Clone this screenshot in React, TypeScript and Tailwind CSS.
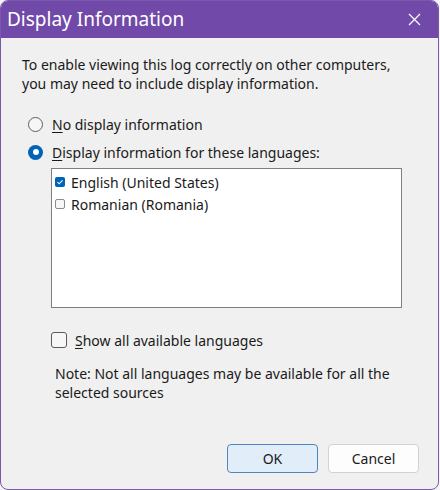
const font = { fontFamily: '"Noto Sans", "Open Sans", sans-serif' }

function Radio({ checked }: { checked?: boolean }) {
  if (checked) {
    return (
      <span className="flex h-[15px] w-[15px] items-center justify-center rounded-full bg-[#0063b8]">
        <span className="h-[6px] w-[6px] rounded-full bg-white" />
      </span>
    )
  }
  return <span className="h-[15px] w-[15px] rounded-full border border-[#5f5f5f] bg-[#f6f6f6]" />
}

function SmallCheck({ checked }: { checked?: boolean }) {
  if (checked) {
    return (
      <span className="flex h-[10px] w-[10px] items-center justify-center rounded-[2px] bg-[#0063b8]">
        <svg width="8" height="8" viewBox="0 0 8 8" fill="none">
          <path d="M1.5 4.2 3.2 5.8 6.5 2.3" stroke="white" strokeWidth="1.1" />
        </svg>
      </span>
    )
  }
  return <span className="h-[10px] w-[10px] rounded-[2px] border border-[#8c8c8c] bg-[#f7f7f7]" />
}

export default function App() {
  return (
    <div className="h-[490px] w-[440px] bg-[#f4f4f4]" style={font}>
      <div className="flex h-[490px] w-[439px] flex-col overflow-hidden rounded-[8px] border border-[#7a58ad] bg-[#f0f0f0]">
        <div className="flex h-[37px] shrink-0 items-center justify-between bg-[#7149a8] pl-[6px] pr-[17px]">
          <span className="text-[19px] leading-none text-white">Display Information</span>
          <svg width="13" height="13" viewBox="0 0 13 13">
            <path d="M1 1 12 12M12 1 1 12" stroke="white" strokeWidth="1.2" />
          </svg>
        </div>

        <div className="flex flex-1 flex-col pl-[21px] pr-[19px] text-[14px] leading-[19px] text-[#1a1a1a]">
          <p className="mt-[17px]">
            To enable viewing this log correctly on other computers,
            <br />
            you may need to include display information.
          </p>

          <div className="ml-[6px] mt-[21px] flex h-[20px] items-center gap-[9px]">
            <Radio />
            <span>
              <span className="underline underline-offset-2">N</span>o display information
            </span>
          </div>
          <div className="ml-[6px] mt-[8px] flex h-[20px] items-center gap-[9px]">
            <Radio checked />
            <span>
              <span className="underline underline-offset-2">D</span>isplay information for these languages:
            </span>
          </div>

          <div className="ml-[29px] mt-[6px] h-[140px] w-[351px] border border-[#7f7f7f] bg-white py-[2px] pl-[3px]">
            <div className="flex h-[22px] items-center gap-[6px]">
              <SmallCheck checked />
              <span>English (United States)</span>
            </div>
            <div className="flex h-[22px] items-center gap-[6px]">
              <SmallCheck />
              <span>Romanian (Romania)</span>
            </div>
          </div>

          <div className="ml-[29px] mt-[22px] flex h-[20px] items-center gap-[8px]">
            <span className="h-[16px] w-[16px] rounded-[3px] border border-[#5c5c5c] bg-[#f7f7f7]" />
            <span>
              <span className="underline underline-offset-2">S</span>how all available languages
            </span>
          </div>

          <p className="ml-[33px] mt-[14px]">
            Note: Not all languages may be available for all the
            <br />
            selected sources
          </p>

          <div className="mt-auto mb-[16px] flex justify-end gap-[10px]">
            <button className="h-[29px] w-[91px] rounded-[4px] border border-[#4f87bd] bg-[#e1edf8] text-[14px] text-[#1a1a1a]">
              OK
            </button>
            <button className="h-[29px] w-[91px] rounded-[4px] border border-[#d2d2d2] bg-[#fdfdfd] text-[14px] text-[#1a1a1a]">
              Cancel
            </button>
          </div>
        </div>
      </div>
    </div>
  )
}
